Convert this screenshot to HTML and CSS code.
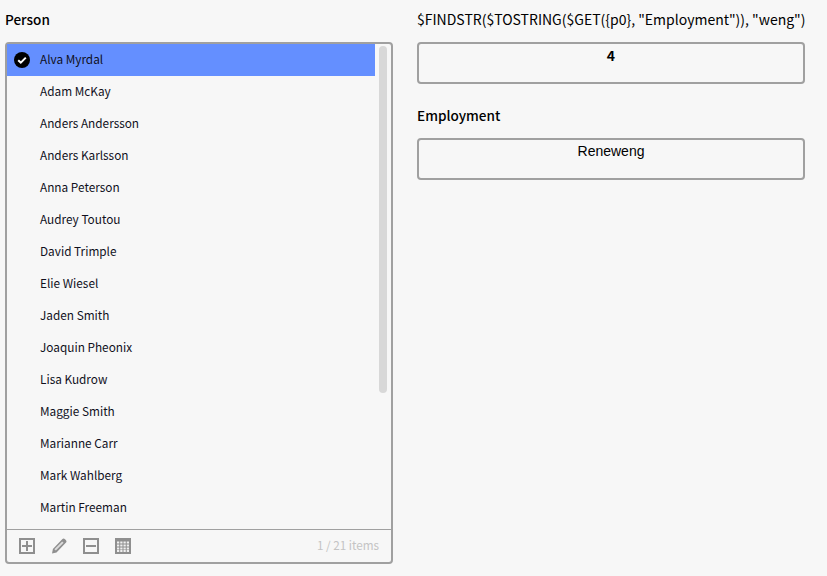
FILE: index.html
```html
<!DOCTYPE html>
<html>
<head>
  <meta charset="utf-8" />
  <title>Person</title>
  <link rel="stylesheet" href="styles.css">
</head>
<body>
<div class="page">
  <div class="column">
    <div class="fieldLabel">Person</div>
    <div class="listBox">
      <div class="listBody">
        <ul class="items">
          <li class="item selected">
            <svg class="check" viewBox="0 0 16 16"><circle cx="8" cy="8" r="8" fill="#000"/><path d="M4.200 8.200l2.600 2.400 5-5" fill="none" stroke="#fff" stroke-width="2"/></svg>
            Alva Myrdal
          </li>
          <li class="item">Adam McKay</li>
          <li class="item">Anders Andersson</li>
          <li class="item">Anders Karlsson</li>
          <li class="item">Anna Peterson</li>
          <li class="item">Audrey Toutou</li>
          <li class="item">David Trimple</li>
          <li class="item">Elie Wiesel</li>
          <li class="item">Jaden Smith</li>
          <li class="item">Joaquin Pheonix</li>
          <li class="item">Lisa Kudrow</li>
          <li class="item">Maggie Smith</li>
          <li class="item">Marianne Carr</li>
          <li class="item">Mark Wahlberg</li>
          <li class="item">Martin Freeman</li>
        </ul>
        <div class="scrollTrack"><div class="scrollThumb"></div></div>
      </div>
      <div class="listFooter">
        <div class="tools">
          <svg class="tool" viewBox="0 0 16 16"><path d="M1 1h14v14H1z" fill="none" stroke="#8f8f8f" stroke-width="2"/><path d="M3 8h10M8 3v10" stroke="#8f8f8f" stroke-width="2"/></svg>
          <svg class="tool" viewBox="0 0 16 16"><path d="M1 15.500l.9-4.600L11.200 1.200a2 2 0 0 1 2.800 0l.8.800a2 2 0 0 1 0 2.800L5.500 14.500z" fill="#8f8f8f"/><path d="M3.400 11.200l1.400 1.400L12.600 4.800l-1.400-1.400z" fill="#dcdcdc"/></svg>
          <svg class="tool" viewBox="0 0 16 16"><path d="M1 1h14v14H1z" fill="none" stroke="#8f8f8f" stroke-width="2"/><path d="M3 8h10" stroke="#8f8f8f" stroke-width="2"/></svg>
          <svg class="tool" viewBox="0 0 16 16"><path d="M0 0h16v16H0z" fill="#8f8f8f"/><path d="M2 4.500h12M2 7.500h12M2 10.500h12M2 13h12" stroke="#f0f0f0" stroke-width="2" stroke-dasharray="2.250 1"/></svg>
        </div>
        <span class="count">1 / 21 items</span>
      </div>
    </div>
  </div>
  <div class="column">
    <div class="fieldLabel formula">$FINDSTR($TOSTRING($GET({p0}, "Employment")), "weng")</div>
    <div class="valueBox boldValue">4</div>
    <div class="fieldLabel nextLabel">Employment</div>
    <div class="valueBox">Reneweng</div>
  </div>
</div>
</body>
</html>
```

FILE: styles.css
```css
* { margin: 0; padding: 0; box-sizing: border-box; }
html, body { height: 100%; }
body { background: #f7f7f7; color: #000; font-family: "Noto Sans CJK SC", "Noto Sans", sans-serif; font-size: 13px; overflow: hidden; }
.page { display: flex; gap: 24px; padding: 9px 0 0 5px; }
.column { width: 388px; }
.fieldLabel { font-size: 13.550px; font-weight: 500; line-height: 20px; margin-bottom: 13px; white-space: nowrap; }
.formula { font-size: 14px; font-weight: 400; }
.nextLabel { margin-top: 21px; }
.listBox { border: 2px solid #a0a0a0; border-radius: 4px; height: 522px; display: flex; flex-direction: column; }
.listBody { display: flex; flex: 1; overflow: hidden; }
.items { list-style: none; width: 368px; }
.item { display: flex; align-items: center; height: 32px; padding: 0 0 4px 33px; font-size: 11.800px; color: #10101c; position: relative; }
.item.selected { background: #648fff; }
.check { position: absolute; left: 7px; top: 8px; width: 16px; height: 16px; }
.scrollTrack { flex: 1; padding: 2px 4px; }
.scrollThumb { width: 8px; height: 347px; background: #d8d8d8; border-radius: 4px; }
.listFooter { height: 33px; border-top: 1px solid #a0a0a0; display: flex; align-items: center; justify-content: space-between; padding: 0 12px; }
.tools { display: flex; gap: 16px; }
.tool { width: 16px; height: 16px; display: block; }
.count { font-size: 11.700px; color: #c4c4c4; padding-bottom: 4px; }
.valueBox { border: 2px solid #a0a0a0; border-radius: 4px; height: 42px; text-align: center; font-family: "Liberation Sans", Arial, sans-serif; font-size: 14px; line-height: 16px; padding-top: 3px; }
.boldValue { font-weight: bold; font-family: "Noto Sans CJK SC", sans-serif; font-size: 14px; line-height: 20px; padding-top: 1px; }
```
